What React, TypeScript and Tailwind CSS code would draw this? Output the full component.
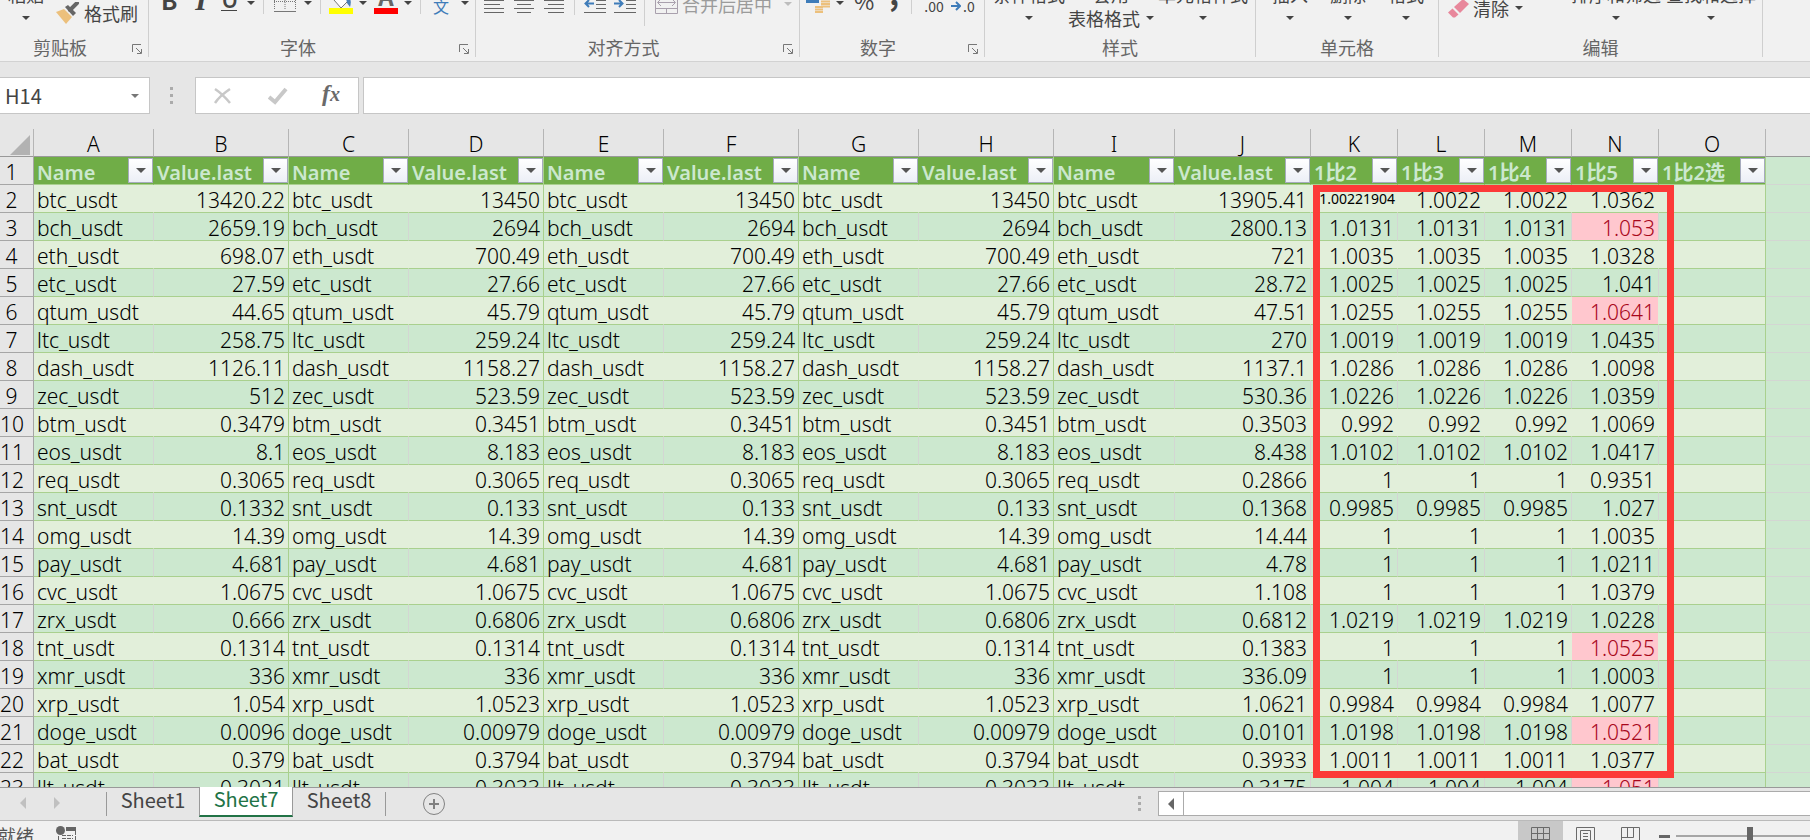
import { useState } from 'react'
import type { ReactNode } from 'react'

type Row = [string, string, string, string, string, string, string, string]

// name, B, D/F/H, J, K, L, M, N
const ROWS: Row[] = [
  ['btc_usdt', '13420.22', '13450', '13905.41', '1.00221904', '1.0022', '1.0022', '1.0362'],
  ['bch_usdt', '2659.19', '2694', '2800.13', '1.0131', '1.0131', '1.0131', '1.053'],
  ['eth_usdt', '698.07', '700.49', '721', '1.0035', '1.0035', '1.0035', '1.0328'],
  ['etc_usdt', '27.59', '27.66', '28.72', '1.0025', '1.0025', '1.0025', '1.041'],
  ['qtum_usdt', '44.65', '45.79', '47.51', '1.0255', '1.0255', '1.0255', '1.0641'],
  ['ltc_usdt', '258.75', '259.24', '270', '1.0019', '1.0019', '1.0019', '1.0435'],
  ['dash_usdt', '1126.11', '1158.27', '1137.1', '1.0286', '1.0286', '1.0286', '1.0098'],
  ['zec_usdt', '512', '523.59', '530.36', '1.0226', '1.0226', '1.0226', '1.0359'],
  ['btm_usdt', '0.3479', '0.3451', '0.3503', '0.992', '0.992', '0.992', '1.0069'],
  ['eos_usdt', '8.1', '8.183', '8.438', '1.0102', '1.0102', '1.0102', '1.0417'],
  ['req_usdt', '0.3065', '0.3065', '0.2866', '1', '1', '1', '0.9351'],
  ['snt_usdt', '0.1332', '0.133', '0.1368', '0.9985', '0.9985', '0.9985', '1.027'],
  ['omg_usdt', '14.39', '14.39', '14.44', '1', '1', '1', '1.0035'],
  ['pay_usdt', '4.681', '4.681', '4.78', '1', '1', '1', '1.0211'],
  ['cvc_usdt', '1.0675', '1.0675', '1.108', '1', '1', '1', '1.0379'],
  ['zrx_usdt', '0.666', '0.6806', '0.6812', '1.0219', '1.0219', '1.0219', '1.0228'],
  ['tnt_usdt', '0.1314', '0.1314', '0.1383', '1', '1', '1', '1.0525'],
  ['xmr_usdt', '336', '336', '336.09', '1', '1', '1', '1.0003'],
  ['xrp_usdt', '1.054', '1.0523', '1.0621', '0.9984', '0.9984', '0.9984', '1.0077'],
  ['doge_usdt', '0.0096', '0.00979', '0.0101', '1.0198', '1.0198', '1.0198', '1.0521'],
  ['bat_usdt', '0.379', '0.3794', '0.3933', '1.0011', '1.0011', '1.0011', '1.0377'],
  ['llt_usdt', '0.3021', '0.3033', '0.3175', '1.004', '1.004', '1.004', '1.051'],
]

const COLUMNS = [
  { letter: 'A', title: 'Name', width: 'w-[120px]' },
  { letter: 'B', title: 'Value.last', width: 'w-[135px]' },
  { letter: 'C', title: 'Name', width: 'w-[120px]' },
  { letter: 'D', title: 'Value.last', width: 'w-[135px]' },
  { letter: 'E', title: 'Name', width: 'w-[120px]' },
  { letter: 'F', title: 'Value.last', width: 'w-[135px]' },
  { letter: 'G', title: 'Name', width: 'w-[120px]' },
  { letter: 'H', title: 'Value.last', width: 'w-[135px]' },
  { letter: 'I', title: 'Name', width: 'w-[121px]' },
  { letter: 'J', title: 'Value.last', width: 'w-[136px]' },
  { letter: 'K', title: '1比2', width: 'w-[87px]' },
  { letter: 'L', title: '1比3', width: 'w-[87px]' },
  { letter: 'M', title: '1比4', width: 'w-[87px]' },
  { letter: 'N', title: '1比5', width: 'w-[87px]' },
  { letter: 'O', title: '1比2选', width: 'w-[107px]' },
]

// each of the joined tables ends at one of these
const TABLE_ENDS = ['B', 'D', 'F', 'H', 'O']

function Caret({ className = '' }: { className?: string }) {
  return (
    <svg viewBox="0 0 8 4" className={`h-1 w-2 shrink-0 ${className}`} fill="currentColor" aria-hidden="true">
      <path d="M0 0h8L4 4z" />
    </svg>
  )
}

function Divider({ className = '' }: { className?: string }) {
  return <span className={`w-px shrink-0 self-stretch bg-[#cfcfcf] ${className}`} />
}

function RibbonGroup({ label, width, launcher, children }: { label: string; width: string; launcher?: boolean; children: ReactNode }) {
  return (
    <section className={`relative flex h-[57px] shrink-0 flex-col border-r border-[#cfcfcf] ${width}`}>
      <div className="flex h-8 shrink-0 items-end overflow-hidden">{children}</div>
      <div className={`flex h-[29px] shrink-0 items-center justify-center text-lg leading-6 text-[#666] ${launcher ? 'pr-7' : ''}`}>
        {label}
      </div>
      {launcher && (
        <button aria-label={`${label}设置`} className="absolute right-1.5 bottom-[3px] text-[#777]">
          <svg viewBox="0 0 10 10" className="size-2.5" fill="none" stroke="currentColor" aria-hidden="true">
            <path d="M.5 8V.5H9M4 4l5 5M9.500 5v4.500H5" />
          </svg>
        </button>
      )}
    </section>
  )
}

function BigButton({ top, bottom, className = '' }: { top: string; bottom?: string; className?: string }) {
  return (
    <button className={`mb-0.5 flex shrink-0 flex-col items-center text-lg leading-6 whitespace-nowrap ${className}`}>
      <span>{top}</span>
      <span className="flex h-6 items-center gap-1.5">
        {bottom && <span>{bottom}</span>}
        <Caret />
      </span>
    </button>
  )
}

function Lines({ path }: { path: string }) {
  return (
    <svg viewBox="0 0 20 14" className="mb-[18px] h-3.5 w-5 shrink-0" stroke="#666" aria-hidden="true">
      <path d={path} />
    </svg>
  )
}

function Ribbon() {
  return (
    <header className="flex h-[62px] shrink-0 overflow-hidden border-b border-[#d2d2d2] bg-[#f1f1f1] text-[#444]">
      <RibbonGroup label="剪贴板" width="w-[149px]" launcher>
        <BigButton top="粘贴" className="ml-2" />
        <button className="mb-[7px] ml-3 flex shrink-0 items-center gap-1 text-lg leading-6 whitespace-nowrap">
          <svg viewBox="0 0 24 22" className="h-[22px] w-6" aria-hidden="true">
            <path d="M0 10l8-3 8 8-6 7z" fill="#ecc07c" />
            <path d="M9 5l3-2 8 8-3 3z" fill="#666" />
            <path d="M14 8l7-7" stroke="#666" strokeWidth="4" strokeLinecap="round" />
          </svg>
          格式刷
        </button>
      </RibbonGroup>
      <RibbonGroup label="字体" width="w-[327px]" launcher>
        <button aria-label="加粗" className="mb-4 ml-3 w-4 shrink-0 text-2xl leading-8 font-bold">B</button>
        <button aria-label="倾斜" className="mb-4 ml-4 w-4 shrink-0 font-['Liberation_Serif',serif] text-3xl leading-8 font-bold italic">I</button>
        <button aria-label="下划线" className="mb-[21px] ml-3 w-4 shrink-0 border-b border-[#444] text-2xl leading-6 font-medium">U</button>
        <Caret className="mb-[27px] ml-2.5" />
        <Divider className="mb-[18px] ml-2" />
        <svg viewBox="0 0 22 14" className="mb-5 ml-2.5 h-3.5 w-[22px] shrink-0" fill="none" stroke="#777" aria-hidden="true">
          <path d="M.5 0v12M21.500 0v12M11 0v12M0 3.500h22" strokeDasharray="1 1" />
          <path d="M0 13.500h22" />
        </svg>
        <Caret className="mb-[27px] ml-2" />
        <Divider className="mb-[18px] ml-2" />
        <svg viewBox="0 0 24 20" className="mb-[18px] ml-2 h-5 w-6 shrink-0" aria-hidden="true">
          <path d="M5 6l8-6 7 6-8 8z" fill="#fff" stroke="#777" />
          <path d="M17 4c4-1 6 2 4 9l-3-4z" fill="#4a7eb5" />
          <path d="M0 14h24v6H0z" fill="#ff0" />
        </svg>
        <Caret className="mb-[27px] ml-1.5" />
        <button
          aria-label="字体颜色"
          className="mb-[18px] ml-[7px] flex h-8 w-6 shrink-0 flex-col items-center border-b-6 border-[#f00] text-2xl leading-7 font-bold text-[#666]"
        >
          A
        </button>
        <Caret className="mb-[27px] ml-1.5" />
        <Divider className="mb-[18px] ml-2" />
        <button aria-label="拼音" className="mb-4 ml-3 w-4 shrink-0 text-base leading-5 text-[#3e7cb9]">文</button>
        <Caret className="mb-[27px] ml-3" />
      </RibbonGroup>
      <RibbonGroup label="对齐方式" width="w-[324px]" launcher>
        <span className="w-2 shrink-0" />
        <Lines path="M0 .5h20M0 4.500h16M0 8.500h20M0 12.500h20" />
        <span className="w-2.5 shrink-0" />
        <Lines path="M0 .5h20M3 4.500h14M0 8.500h20M3 12.500h14" />
        <span className="w-2.5 shrink-0" />
        <Lines path="M0 .5h20M4 4.500h16M0 8.500h20M4 12.500h16" />
        <Divider className="mb-[17px] ml-2.5" />
        <svg viewBox="0 0 22 14" className="mb-[18px] ml-[9px] h-3.5 w-[22px] shrink-0" stroke="#666" aria-hidden="true">
          <path d="M12 .5h10M12 4.500h10M12 8.500h10M0 12.500h22" />
          <path d="M10 3.500H2M5 0L1.500 3.500L5 7" stroke="#3e7cb9" strokeWidth="2" fill="none" />
        </svg>
        <svg viewBox="0 0 22 14" className="mb-[18px] ml-2 h-3.5 w-[22px] shrink-0" stroke="#666" aria-hidden="true">
          <path d="M12 .5h10M12 4.500h10M12 8.500h10M0 12.500h22" />
          <path d="M0 3.500h8M5 0l3.500 3.500L5 7" stroke="#3e7cb9" strokeWidth="2" fill="none" />
        </svg>
        <Divider className="mb-1.5 ml-2" />
        <button className="mb-4 ml-2.5 flex shrink-0 items-center gap-1 text-lg leading-6 whitespace-nowrap text-[#9b9b9b]">
          <svg viewBox="0 0 23 20" className="h-5 w-[23px]" fill="none" stroke="#a9a0ad" aria-hidden="true">
            <path d="M.5 0v19.500h22V0M0 14.500h23M11.500 14v5M3 8.500h17M6 5L2.500 8.500L6 12M17 5l3.500 3.500L17 12" />
          </svg>
          合并后居中
          <Caret className="ml-2 text-[#bdbdbd]" />
        </button>
      </RibbonGroup>
      <RibbonGroup label="数字" width="w-[185px]" launcher>
        <svg viewBox="0 0 24 14" className="mb-[18px] ml-1.5 h-3.5 w-6 shrink-0" aria-hidden="true">
          <path d="M0 0h13v3H0z" fill="#3e7cb9" />
          <path d="M15 1.500h9M15 4h9M15 6.500h9M9 7h8M9 9.500h8M9 12h8" stroke="#ecc07c" strokeWidth="2" />
        </svg>
        <Caret className="mb-[27px] ml-1.5" />
        <button aria-label="百分比" className="mb-5 ml-2.5 w-5 shrink-0 text-[22px] leading-6">%</button>
        <button aria-label="千位分隔" className="mb-[26px] ml-3.5 w-3 shrink-0 text-3xl leading-7 font-bold">,</button>
        <Divider className="mb-[18px] ml-[11px]" />
        <button aria-label="增加小数位" className="mb-4 ml-3 w-5 shrink-0 text-sm leading-5">.00</button>
        <button aria-label="减少小数位" className="mb-4 ml-[7px] flex shrink-0 items-center gap-0.5 text-sm leading-5">
          <svg viewBox="0 0 10 10" className="size-2.5" fill="none" stroke="#3e7cb9" strokeWidth="2" aria-hidden="true">
            <path d="M0 5h8M5 1l4 4l-4 4" />
          </svg>
          .0
        </button>
      </RibbonGroup>
      <RibbonGroup label="样式" width="w-[271px]">
        <BigButton top="条件格式" className="ml-2" />
        <BigButton top="套用" bottom="表格格式" className="ml-[3px]" />
        <BigButton top="单元格样式" className="ml-1" />
      </RibbonGroup>
      <RibbonGroup label="单元格" width="w-[183px]">
        <BigButton top="插入" className="ml-4" />
        <BigButton top="删除" className="ml-[22px]" />
        <BigButton top="格式" className="ml-[22px]" />
      </RibbonGroup>
      <RibbonGroup label="编辑" width="w-[324px]">
        <button className="mb-3 ml-2 flex h-6 shrink-0 items-center gap-1 text-lg leading-6 whitespace-nowrap">
          <svg viewBox="0 0 22 20" className="h-5 w-[22px]" aria-hidden="true">
            <path d="M7 9l9-8 6 5-9 9z" fill="#e8879b" />
            <path d="M5.500 10.500l6 6L8 19.500H6l-5-5z" fill="#e8879b" />
          </svg>
          清除
          <Caret className="ml-0.5" />
        </button>
        <BigButton top="排序和筛选" className="ml-12" />
        <BigButton top="查找和选择" className="ml-[5px]" />
      </RibbonGroup>
    </header>
  )
}

function FormulaBar() {
  return (
    <div className="flex h-[67px] shrink-0 items-start bg-[#e6e6e6] pt-[15px]">
      <div className="flex h-[37px] w-[150px] shrink-0 items-center border border-l-0 border-[#c6c6c6] bg-white pr-2.5">
        <input aria-label="名称框" defaultValue="H14" className="min-w-0 flex-1 bg-transparent pl-[5px] text-xl leading-6 text-[#444] outline-none" />
        <button aria-label="名称列表" className="text-[#777]">
          <Caret />
        </button>
      </div>
      <div className="flex h-[37px] w-[45px] shrink-0 flex-col items-center justify-center gap-1 pr-0.5">
        <i className="size-[3px] bg-[#ababab]" />
        <i className="size-[3px] bg-[#ababab]" />
        <i className="size-[3px] bg-[#ababab]" />
      </div>
      <div className="flex h-[37px] w-[164px] shrink-0 items-center justify-between border border-[#c6c6c6] bg-white pr-[18px] pl-[17px]">
        <button aria-label="取消">
          <svg viewBox="0 0 20 18" className="h-[18px] w-5" fill="none" stroke="#c8c8c8" strokeWidth="2.500" aria-hidden="true">
            <path d="M2 2c6 4 10 8 15 14M17 2C11 6 6 10 2 16" />
          </svg>
        </button>
        <button aria-label="输入">
          <svg viewBox="0 0 20 18" className="h-[18px] w-5" fill="none" stroke="#c8c8c8" strokeWidth="4" aria-hidden="true">
            <path d="M1 10l6 5L18 2" />
          </svg>
        </button>
        <button aria-label="插入函数" className="pb-1 font-['Liberation_Serif',serif] text-2xl leading-7 font-bold text-[#6a6a6a] italic">
          f<span className="text-xl">x</span>
        </button>
      </div>
      <input aria-label="编辑栏" className="ml-1 h-[37px] min-w-0 flex-1 border border-r-0 border-[#c6c6c6] bg-white px-2 text-xl outline-none" />
    </div>
  )
}

function SheetRow({ row, index }: { row: Row; index: number }) {
  const [name, b, d, j, k, l, m, n] = row
  const cells = [name, b, name, d, name, d, name, d, name, j, k, l, m, n, '']
  const banded = index % 2 === 1

  return (
    <tr className={`h-7 ${banded ? 'bg-[#cce8cf]' : 'bg-[#e2efda]'}`}>
      <th scope="row" className="border-r border-b border-[#a6a6a6] bg-[#e6e6e6] pt-1 pr-2.5 text-center font-light">
        {index + 2}
      </th>
      {cells.map((value, i) => {
        const { letter } = COLUMNS[i]
        const hot = letter === 'N' && Number(value) >= 1.05
        // unrounded value, set smaller so that it fits the column
        const long = letter === 'K' && value.length > 6
        const edge = TABLE_ENDS.includes(letter)
          ? 'border-r-[#a9d08e]'
          : banded
            ? 'border-r-[#d3d6d3]'
            : 'border-r-[#e2efda]'
        return (
          <td
            key={letter}
            className={`border-r border-b border-b-[#a9d08e] whitespace-nowrap ${edge} ${value === name ? 'text-left' : 'text-right'} ${
              long ? 'pr-0.5 text-sm leading-6 font-normal' : 'px-[3px] pt-1'
            } ${hot ? 'bg-[#ffc7ce] text-[#a8061a]' : ''}`}
          >
            {value}
          </td>
        )
      })}
      <td className="border-b border-[#d3d6d3] bg-[#cce8cf]" />
    </tr>
  )
}

function Sheet() {
  return (
    <main className="relative min-h-0 flex-1 overflow-hidden bg-[#cce8cf]">
      <table className="w-full table-fixed border-separate border-spacing-0 font-['Noto_Sans','Noto_Sans_CJK_SC',sans-serif] text-[21px] leading-[23px] font-light text-black">
        <colgroup>
          <col className="w-[34px]" />
          {COLUMNS.map((c) => (
            <col key={c.letter} className={c.width} />
          ))}
          <col />
        </colgroup>
        <thead>
          <tr className="h-7 bg-[#e6e6e6]">
            <th className="border-r border-b border-r-[#b5b5b5] border-b-[#999] p-0">
              <svg viewBox="0 0 20 20" className="mt-1 ml-2.5 size-5" aria-label="全选">
                <path d="M20 0v20H0z" fill="#b2b2b2" />
              </svg>
            </th>
            {COLUMNS.map((c) => (
              <th key={c.letter} scope="col" className="border-r border-b border-r-[#b5b5b5] border-b-[#999] pt-1 text-center font-light">
                {c.letter}
              </th>
            ))}
            <th className="border-b border-[#999]" />
          </tr>
        </thead>
        <tbody>
          <tr className="h-7 bg-[#70ad47]">
            <th scope="row" className="border-r border-b border-[#a6a6a6] bg-[#e6e6e6] pt-1 pr-2.5 text-center font-light">
              1
            </th>
            {COLUMNS.map((c) => (
              <td
                key={c.letter}
                className={`border-r border-b border-b-[#a9d08e] pl-[3px] ${
                  TABLE_ENDS.includes(c.letter) ? 'border-r-[#a9d08e]' : 'border-r-[#70ad47]'
                }`}
              >
                <div className="flex h-[27px] items-center justify-between text-xl leading-[22px] font-semibold whitespace-nowrap text-[#cce8cf]">
                  <span className="pt-1">{c.title}</span>
                  <button
                    aria-label={`筛选 ${c.letter}`}
                    className="flex size-[25px] shrink-0 items-center justify-center border border-[#a6abbd] bg-linear-to-b from-white to-[#eceff6] text-[#555]"
                  >
                    <svg viewBox="0 0 10 5" className="h-[5px] w-2.5" fill="currentColor" aria-hidden="true">
                      <path d="M0 0h10L5 5z" />
                    </svg>
                  </button>
                </div>
              </td>
            ))}
            <td className="border-b border-[#d3d6d3] bg-[#cce8cf]" />
          </tr>
          {ROWS.map((row, i) => (
            <SheetRow key={row[0]} row={row} index={i} />
          ))}
        </tbody>
      </table>
      {/* highlight drawn over K2:N22 */}
      <div className="pointer-events-none absolute top-14 left-[1313px] h-[593px] w-[361px] border-7 border-[#fc3a38]" />
    </main>
  )
}

function SheetTabs() {
  const [active, setActive] = useState('Sheet7')

  return (
    <nav className="flex h-[34px] shrink-0 items-start border-y border-t-[#999] border-b-[#bababa] bg-[#e6e6e6] text-[#c0c0c0]">
      <button aria-label="上一个工作表" className="mt-[9px] ml-5">
        <svg viewBox="0 0 6 12" className="h-3 w-1.5" fill="currentColor" aria-hidden="true">
          <path d="M6 0v12L0 6z" />
        </svg>
      </button>
      <button aria-label="下一个工作表" className="mt-[9px] ml-7">
        <svg viewBox="0 0 6 12" className="h-3 w-1.5" fill="currentColor" aria-hidden="true">
          <path d="M0 0v12l6-6z" />
        </svg>
      </button>
      <span className="mt-1 ml-[46px] h-6 w-px bg-[#999]" />
      {['Sheet1', 'Sheet7', 'Sheet8'].map((name) => (
        <button
          key={name}
          onClick={() => setActive(name)}
          className={
            name === active
              ? '-mt-px h-[30px] w-[94px] border-x border-b-2 border-x-[#999] border-b-[#217346] bg-white pb-1.5 text-xl leading-6 text-[#217346]'
              : 'h-7 w-[92px] pb-1.5 text-xl leading-6 text-[#444]'
          }
        >
          {name}
        </button>
      ))}
      <span className="mt-1 h-6 w-px bg-[#999]" />
      <button aria-label="新工作表" className="mt-[5px] ml-[37px] text-[#808080]">
        <svg viewBox="0 0 22 22" className="size-[22px]" fill="none" stroke="currentColor" aria-hidden="true">
          <circle cx="11" cy="11" r="10.500" />
          <path d="M6 11h10M11 6v10" strokeWidth="2" />
        </svg>
      </button>
      <div className="mt-2 ml-auto flex flex-col gap-[3px]">
        <i className="size-[3px] bg-[#ababab]" />
        <i className="size-[3px] bg-[#ababab]" />
        <i className="size-[3px] bg-[#ababab]" />
      </div>
      <div className="mt-[3px] ml-[17px] flex h-[25px] w-[652px] shrink-0 border border-r-0 border-[#ababab] bg-white">
        <button aria-label="向左滚动" className="flex w-[25px] items-center justify-center border-r border-[#ababab] text-[#666]">
          <svg viewBox="0 0 6 12" className="h-3 w-1.5" fill="currentColor" aria-hidden="true">
            <path d="M6 0v12L0 6z" />
          </svg>
        </button>
      </div>
    </nav>
  )
}

function StatusBar() {
  return (
    <footer className="flex h-[19px] shrink-0 items-start overflow-hidden bg-[#f1f1f1] text-[#555]">
      <span className="-ml-0.5 pt-0.5 text-lg leading-6">就绪</span>
      <svg viewBox="0 0 20 18" className="mt-[5px] ml-[22px] h-[18px] w-5 shrink-0" aria-hidden="true">
        <circle cx="4.500" cy="4.500" r="4.500" fill="#666" />
        <path d="M10 1h10v4H10z" fill="#666" />
        <path d="M2.500 10v8M19.500 5v13M6 9.500h11M6 12.500h11" stroke="#666" strokeDasharray="4 1" />
      </svg>
      <button aria-label="普通" className="ml-auto flex h-7 w-[45px] shrink-0 justify-center bg-[#c8c8c8] pt-1.5">
        <svg viewBox="0 0 19 19" className="size-[19px]" fill="none" stroke="#6a6a6a" aria-hidden="true">
          <path d="M.5.5h18v18H.5zM6.500 0v19M12.500 0v19M0 6.500h19M0 12.500h19" />
        </svg>
      </button>
      <button aria-label="页面布局" className="flex h-7 w-[45px] shrink-0 justify-center pt-1.5">
        <svg viewBox="0 0 19 19" className="size-[19px]" fill="none" stroke="#6a6a6a" aria-hidden="true">
          <path d="M.5.5h18v18H.5zM4.500 19V3.500h10V19M7 6.500h5M7 9.500h5M7 12.500h5" />
        </svg>
      </button>
      <button aria-label="分页预览" className="flex h-7 w-[45px] shrink-0 justify-center pt-1.5">
        <svg viewBox="0 0 19 19" className="size-[19px]" fill="none" stroke="#6a6a6a" aria-hidden="true">
          <path d="M.5.5h18v18H.5zM6.500 0v10.500M12.500 0v10.500M0 10.500h12.500" />
        </svg>
      </button>
      <button aria-label="缩小" className="mt-3.5 ml-1.5 h-[3px] w-[11px] shrink-0 bg-[#666]" />
      <div className="ml-1.5 w-[134px] shrink-0 overflow-hidden">
        <input
          type="range"
          aria-label="缩放"
          defaultValue={50}
          className="mt-1.5 block h-[18px] w-[148px] appearance-none bg-transparent [&::-webkit-slider-runnable-track]:h-0.5 [&::-webkit-slider-runnable-track]:bg-[#a6a6a6] [&::-webkit-slider-thumb]:-mt-2 [&::-webkit-slider-thumb]:h-[18px] [&::-webkit-slider-thumb]:w-1.5 [&::-webkit-slider-thumb]:appearance-none [&::-webkit-slider-thumb]:bg-[#666]"
        />
      </div>
    </footer>
  )
}

export default function App() {
  return (
    <div className="flex h-screen flex-col overflow-hidden font-['Noto_Sans_CJK_SC',sans-serif]">
      <Ribbon />
      <FormulaBar />
      <Sheet />
      <SheetTabs />
      <StatusBar />
    </div>
  )
}
